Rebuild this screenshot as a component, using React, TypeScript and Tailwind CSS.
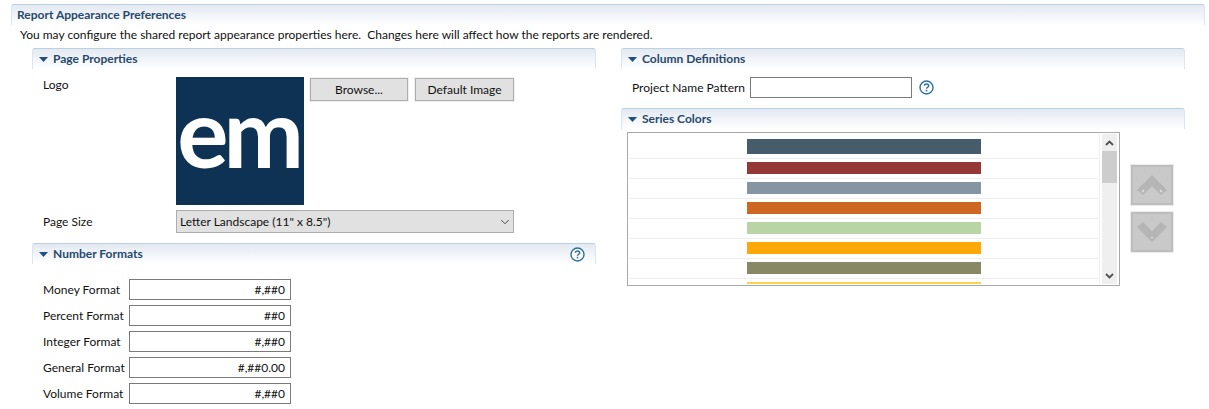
import { ChevronDown } from "lucide-react";

const seriesColors = [
  "#475c6b",
  "#953735",
  "#8595a2",
  "#cd6721",
  "#b9d5a6",
  "#ffa908",
  "#898865",
  "#ffd24d",
];

const numberFormats = [
  { label: "Money Format", value: "#,##0" },
  { label: "Percent Format", value: "##0" },
  { label: "Integer Format", value: "#,##0" },
  { label: "General Format", value: "#,##0.00" },
  { label: "Volume Format", value: "#,##0" },
];

function HelpIcon() {
  return (
    <svg width="15" height="15" viewBox="0 0 15 15" fill="none">
      <circle cx="7.5" cy="7.5" r="6.5" stroke="#2f6f9f" strokeWidth="1.4" fill="#fff" />
      <path
        d="M5.3 5.8C5.4 4.5 6.3 3.9 7.5 3.9c1.3 0 2.2.7 2.2 1.8 0 1.6-2.2 1.5-2.2 3.1"
        stroke="#2f6f9f"
        strokeWidth="1.5"
      />
      <rect x="6.7" y="9.8" width="1.6" height="1.6" fill="#2f6f9f" />
    </svg>
  );
}

function SectionHeader({
  title,
  help,
  noToggle,
}: {
  title: string;
  help?: boolean;
  noToggle?: boolean;
}) {
  return (
    <div className="flex h-[21px] items-center rounded-t-[3px] border-x border-t border-[#bcd0e0] border-b-0 bg-gradient-to-b from-[#e3e9f2] to-white pl-[5px] pr-[10px] [border-left-color:#dbe5ee] [border-right-color:#dbe5ee]">
      {!noToggle && (
        <svg width="9" height="5" viewBox="0 0 9 5" className="ml-px mr-[5px]">
          <path d="M0 0h9L4.5 5z" fill="#1f4f82" />
        </svg>
      )}
      <span className="flex-1 text-[12px] font-bold text-[#27496e]">{title}</span>
      {help && <HelpIcon />}
    </div>
  );
}

function ArrowButton({ up }: { up?: boolean }) {
  return (
    <div className="flex h-[40px] w-[42px] items-center justify-center border-2 border-[#bdbdbd] bg-[#c9c9c9] outline outline-1 outline-[#ececec]">
      <svg width="30" height="20" viewBox="0 0 30 20">
        {up ? (
          <>
            <path d="M15 0L30 15l-6 5-9-9-9 9-6-5z" fill="#b5b5b5" />
            <path d="M5 17l2-2M25 17l-2-2" stroke="#e2e2e2" strokeWidth="1.5" />
          </>
        ) : (
          <>
            <path d="M15 20L30 5 24 0l-9 9-9-9-6 5z" fill="#b5b5b5" />
            <path d="M14 15l1 1 1-1" stroke="#e2e2e2" strokeWidth="1" fill="none" />
          </>
        )}
      </svg>
    </div>
  );
}

export default function App() {
  return (
    <div className="h-[409px] w-[1209px] overflow-hidden bg-white pl-[11px] pr-[4px] pt-[4px] font-['Lato',sans-serif] text-[12px] leading-[16px] text-[#111]">
      <SectionHeader title="Report Appearance Preferences" noToggle />
      <p className="ml-[9px] mt-[2px] whitespace-pre text-[12px]">
        You may configure the shared report appearance properties here.  Changes here will affect how the reports are rendered.
      </p>

      <div className="ml-[21px] mt-[5px] flex w-[1153px] gap-[25px]">
        {/* left column */}
        <div className="w-[564px] shrink-0">
          <SectionHeader title="Page Properties" />
          <div className="ml-[11px] mt-[8px] flex">
            <span className="w-[133px]">Logo</span>
            <div className="flex h-[128px] w-[128px] items-center justify-center bg-[#0d3253] pb-[20px] pr-[4px]">
              <span className="font-['Lato',sans-serif] text-[96px] font-bold leading-none tracking-[-5px] text-white">em</span>
            </div>
            <button className="ml-[6px] mt-px h-[23px] w-[98px] border border-[#adadad] bg-[#e1e1e1] outline outline-1 outline-[#f0f0f0]">
              Browse...
            </button>
            <button className="ml-[7px] mt-px h-[23px] w-[99px] border border-[#adadad] bg-[#e1e1e1] outline outline-1 outline-[#f0f0f0]">
              Default Image
            </button>
          </div>
          <div className="ml-[11px] mt-[5px] flex items-center">
            <span className="w-[133px]">Page Size</span>
            <div className="flex h-[23px] w-[338px] items-center justify-between border border-[#adadad] bg-[#e1e1e1] pl-[3px] pr-[1px]">
              <span>Letter Landscape (11" x 8.5")</span>
              <ChevronDown size={14} strokeWidth={1.5} color="#333" />
            </div>
          </div>

          <div className="mt-[10px]">
            <SectionHeader title="Number Formats" help />
          </div>
          <div className="ml-[11px] mt-[15px] flex flex-col gap-[5px]">
            {numberFormats.map((f) => (
              <div key={f.label} className="flex h-[21px] items-center">
                <span className="w-[86px] whitespace-nowrap">{f.label}</span>
                <div className="h-[21px] w-[162px] border border-[#7a7a7a] pr-[5px] text-right leading-[19px]">
                  {f.value}
                </div>
              </div>
            ))}
          </div>
        </div>

        {/* right column */}
        <div className="w-[564px] shrink-0">
          <SectionHeader title="Column Definitions" />
          <div className="ml-[11px] mt-[8px] flex items-center">
            <span className="w-[118px] whitespace-nowrap">Project Name Pattern</span>
            <div className="h-[21px] w-[162px] border border-[#7a7a7a]" />
            <span className="ml-[7px]"><HelpIcon /></span>
          </div>

          <div className="mt-[10px]">
            <SectionHeader title="Series Colors" />
          </div>
          <div className="ml-[6px] mt-[3px] flex items-start">
            <div className="flex h-[154px] w-[493px] border border-[#a9a9a9] py-px pl-px pr-[2px]">
              <div className="mr-[2px] flex-1 overflow-hidden border-r border-[#eeeeee] pr-[1px] pt-[1px]">
                {seriesColors.map((c, i) => (
                  <div
                    key={c}
                    className={`flex justify-center border-b border-[#eeeeee] ${i === 0 ? "h-[24px] pt-[4px]" : "h-[20px] pt-[3px]"}`}
                  >
                    <div
                      className={`w-[234px] ${i === 0 ? "h-[15px]" : "h-[12px]"}`}
                      style={{ backgroundColor: c }}
                    />
                  </div>
                ))}
              </div>
              <div className="flex w-[15px] shrink-0 flex-col bg-[#efefef]">
                <div className="flex h-[17px] items-center justify-center">
                  <svg width="9" height="6" viewBox="0 0 9 6">
                    <path d="M1 5l3.5-3.5L8 5" stroke="#505050" strokeWidth="1.8" fill="none" />
                  </svg>
                </div>
                <div className="h-[32px] bg-[#cdcdcd]" />
                <div className="flex-1" />
                <div className="flex h-[17px] items-center justify-center">
                  <svg width="9" height="6" viewBox="0 0 9 6">
                    <path d="M1 1l3.5 3.5L8 1" stroke="#505050" strokeWidth="1.8" fill="none" />
                  </svg>
                </div>
              </div>
            </div>
            <div className="ml-[11px] mt-[33px] flex flex-col gap-[7px]">
              <ArrowButton up />
              <ArrowButton />
            </div>
          </div>
        </div>
      </div>
    </div>
  );
}
